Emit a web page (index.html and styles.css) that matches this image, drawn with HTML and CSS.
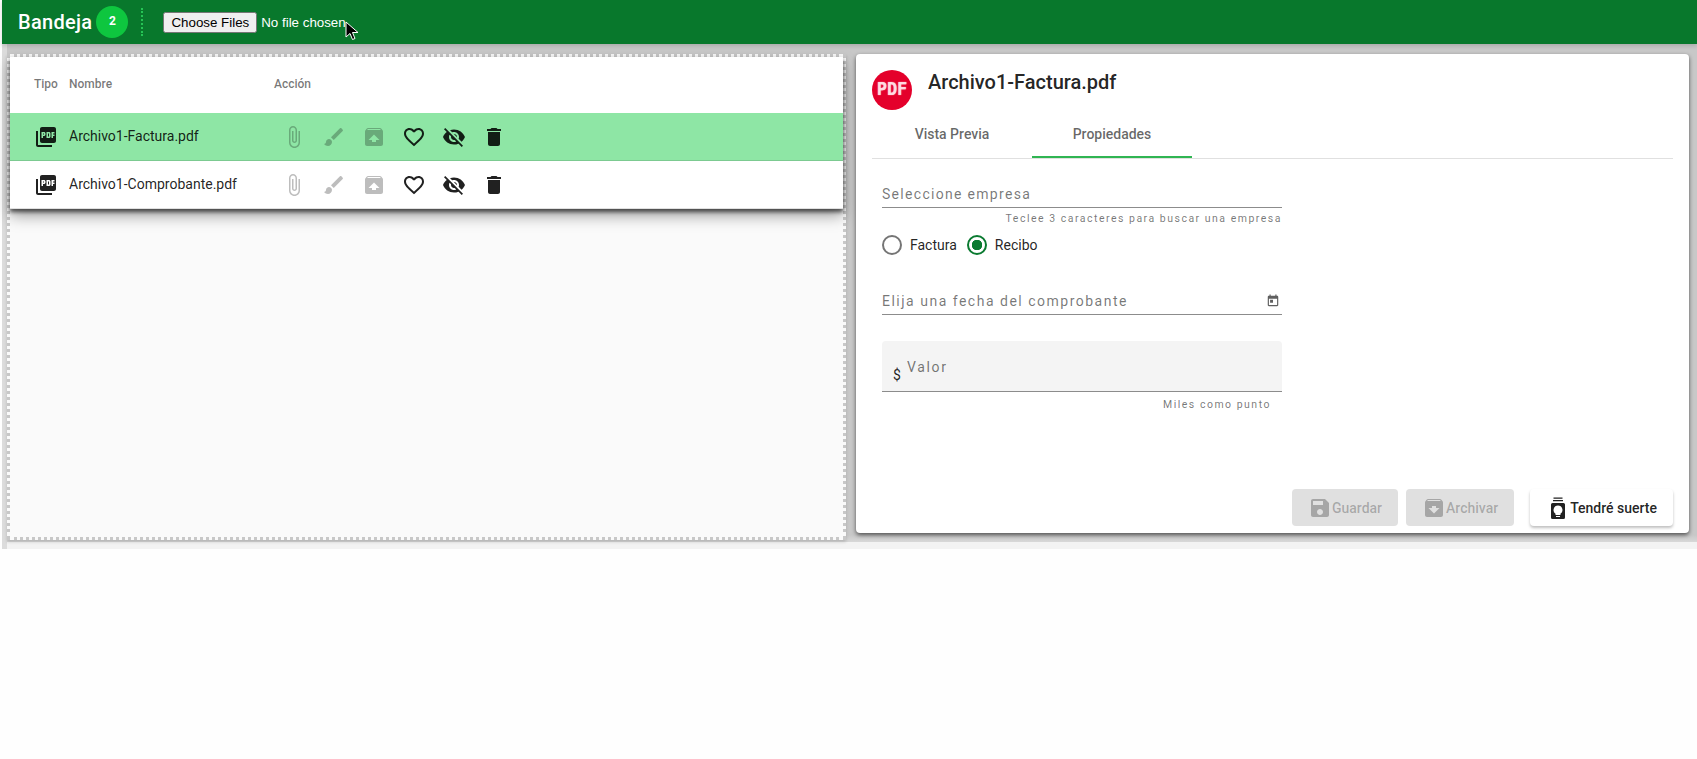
FILE: index.html

```html
<!doctype html>
<html lang="es">
<head>
    <meta http-equiv="Content-Type" content="text/html; charset=utf-8"/>
    <title>Bandeja</title>
    <link rel="stylesheet" href="styles.css">
</head>

<body>

<!--barra superior-->
<div class="topbar">
    <span class="topbar-title">Bandeja</span>
    <span class="badge">2</span>
    <span class="topbar-sep"></span>
    <input class="file-input" type="file" multiple>
    <svg class="mouse" viewBox="0 0 14 20"><path d="M1 1v15l4-3.5 2.5 6 2.5-1-2.5-6H13z"/></svg>
</div>

<div class="main">
    <!--lista de archivos-->
    <div class="dropzone">
        <div class="table">
            <div class="table-row table-head">
                <span>Tipo</span>
                <span>Nombre</span>
                <span>Acción</span>
            </div>
            <div class="table-row file-row selected">
                <svg class="icon" viewBox="0 0 24 24"><path d="M20 2H8c-1.1 0-2 .9-2 2v12c0 1.1.9 2 2 2h12c1.1 0 2-.9 2-2V4c0-1.1-.9-2-2-2zm-8.5 7.5c0 .83-.67 1.5-1.5 1.5H9v2H7.5V7H10c.83 0 1.5.67 1.5 1.5v1zm5 2c0 .83-.67 1.5-1.5 1.5h-2.5V7H15c.83 0 1.5.67 1.5 1.5v3zm4-3H19v1h1.5V11H19v2h-1.5V7h3v1.5zM9 9.5h1v-1H9v1zM4 6H2v14c0 1.1.9 2 2 2h14v-2H4V6zm10 5.5h1v-3h-1v3z"/></svg>
                <span class="file-name">Archivo1-Factura.pdf</span>
                <div class="actions">
                    <span class="action off"><svg class="icon" viewBox="0 0 24 24"><path d="M16.5 6v11.5c0 2.21-1.79 4-4 4s-4-1.79-4-4V5c0-1.38 1.12-2.5 2.5-2.5s2.5 1.12 2.5 2.5v10.5c0 .55-.45 1-1 1s-1-.45-1-1V6H10v9.5c0 1.38 1.12 2.5 2.5 2.5s2.5-1.12 2.5-2.5V5c0-2.21-1.79-4-4-4S7 2.79 7 5v12.5c0 3.04 2.46 5.5 5.5 5.5s5.5-2.46 5.5-5.5V6h-1.5z"/></svg></span>
                    <span class="action off"><svg class="icon" viewBox="0 0 24 24"><path d="M7 14c-1.66 0-3 1.34-3 3 0 1.31-1.16 2-2 2 .92 1.22 2.49 2 4 2 2.21 0 4-1.79 4-4 0-1.66-1.34-3-3-3zm13.71-9.37l-1.34-1.34c-.39-.39-1.02-.39-1.41 0L9 12.25 11.75 15l8.96-8.96c.39-.39.39-1.02 0-1.41z"/></svg></span>
                    <span class="action off"><svg class="icon" viewBox="0 0 24 24"><path d="M20.55 5.22l-1.39-1.68C18.88 3.21 18.47 3 18 3H6c-.47 0-.88.21-1.15.55L3.46 5.22C3.17 5.57 3 6.01 3 6.5V19c0 1.1.89 2 2 2h14c1.1 0 2-.9 2-2V6.5c0-.49-.17-.93-.45-1.28zM12 9.5l5.5 5.5H14v2h-4v-2H6.5L12 9.5zM5.12 5l.82-1h12l.93 1H5.12z"/></svg></span>
                    <span class="action"><svg class="icon" viewBox="0 0 24 24"><path d="M16.5 3c-1.74 0-3.41.81-4.5 2.09C10.91 3.81 9.24 3 7.5 3 4.42 3 2 5.42 2 8.5c0 3.78 3.4 6.86 8.55 11.54L12 21.35l1.45-1.32C18.6 15.36 22 12.28 22 8.5 22 5.42 19.58 3 16.5 3zm-4.4 15.55l-.1.1-.1-.1C7.14 14.24 4 11.39 4 8.5 4 6.5 5.5 5 7.5 5c1.54 0 3.04.99 3.57 2.36h1.87C13.46 5.99 14.96 5 16.5 5c2 0 3.5 1.5 3.5 3.5 0 2.89-3.14 5.74-7.9 10.05z"/></svg></span>
                    <span class="action"><svg class="icon" viewBox="0 0 24 24"><path d="M12 7c2.76 0 5 2.24 5 5 0 .65-.13 1.26-.36 1.83l2.92 2.92c1.51-1.26 2.7-2.89 3.43-4.75-1.73-4.39-6-7.5-11-7.5-1.4 0-2.74.25-3.98.7l2.16 2.16C10.74 7.13 11.35 7 12 7zM2 4.27l2.28 2.28.46.46C3.08 8.3 1.78 10.02 1 12c1.73 4.39 6 7.5 11 7.5 1.55 0 3.03-.3 4.38-.84l.42.42L19.73 22 21 20.73 3.27 3 2 4.27zM7.53 9.8l1.55 1.55c-.05.21-.08.43-.08.65 0 1.66 1.34 3 3 3 .22 0 .44-.03.65-.08l1.55 1.55c-.67.33-1.41.53-2.2.53-2.76 0-5-2.24-5-5 0-.79.2-1.53.53-2.2zm4.31-.78l3.15 3.15.02-.16c0-1.66-1.34-3-3-3l-.17.01z"/></svg></span>
                    <span class="action"><svg class="icon" viewBox="0 0 24 24"><path d="M6 19c0 1.1.9 2 2 2h8c1.1 0 2-.9 2-2V7H6v12zM19 4h-3.5l-1-1h-5l-1 1H5v2h14V4z"/></svg></span>
                </div>
            </div>
            <div class="table-row file-row">
                <svg class="icon" viewBox="0 0 24 24"><path d="M20 2H8c-1.1 0-2 .9-2 2v12c0 1.1.9 2 2 2h12c1.1 0 2-.9 2-2V4c0-1.1-.9-2-2-2zm-8.5 7.5c0 .83-.67 1.5-1.5 1.5H9v2H7.5V7H10c.83 0 1.5.67 1.5 1.5v1zm5 2c0 .83-.67 1.5-1.5 1.5h-2.5V7H15c.83 0 1.5.67 1.5 1.5v3zm4-3H19v1h1.5V11H19v2h-1.5V7h3v1.5zM9 9.5h1v-1H9v1zM4 6H2v14c0 1.1.9 2 2 2h14v-2H4V6zm10 5.5h1v-3h-1v3z"/></svg>
                <span class="file-name">Archivo1-Comprobante.pdf</span>
                <div class="actions">
                    <span class="action off"><svg class="icon" viewBox="0 0 24 24"><path d="M16.5 6v11.5c0 2.21-1.79 4-4 4s-4-1.79-4-4V5c0-1.38 1.12-2.5 2.5-2.5s2.5 1.12 2.5 2.5v10.5c0 .55-.45 1-1 1s-1-.45-1-1V6H10v9.5c0 1.38 1.12 2.5 2.5 2.5s2.5-1.12 2.5-2.5V5c0-2.21-1.79-4-4-4S7 2.79 7 5v12.5c0 3.04 2.46 5.5 5.5 5.5s5.5-2.46 5.5-5.5V6h-1.5z"/></svg></span>
                    <span class="action off"><svg class="icon" viewBox="0 0 24 24"><path d="M7 14c-1.66 0-3 1.34-3 3 0 1.31-1.16 2-2 2 .92 1.22 2.49 2 4 2 2.21 0 4-1.79 4-4 0-1.66-1.34-3-3-3zm13.71-9.37l-1.34-1.34c-.39-.39-1.02-.39-1.41 0L9 12.25 11.75 15l8.96-8.96c.39-.39.39-1.02 0-1.41z"/></svg></span>
                    <span class="action off"><svg class="icon" viewBox="0 0 24 24"><path d="M20.55 5.22l-1.39-1.68C18.88 3.21 18.47 3 18 3H6c-.47 0-.88.21-1.15.55L3.46 5.22C3.17 5.57 3 6.01 3 6.5V19c0 1.1.89 2 2 2h14c1.1 0 2-.9 2-2V6.5c0-.49-.17-.93-.45-1.28zM12 9.5l5.5 5.5H14v2h-4v-2H6.5L12 9.5zM5.12 5l.82-1h12l.93 1H5.12z"/></svg></span>
                    <span class="action"><svg class="icon" viewBox="0 0 24 24"><path d="M16.5 3c-1.74 0-3.41.81-4.5 2.09C10.91 3.81 9.24 3 7.5 3 4.42 3 2 5.42 2 8.5c0 3.78 3.4 6.86 8.55 11.54L12 21.35l1.45-1.32C18.6 15.36 22 12.28 22 8.5 22 5.42 19.58 3 16.5 3zm-4.4 15.55l-.1.1-.1-.1C7.14 14.24 4 11.39 4 8.5 4 6.5 5.5 5 7.5 5c1.54 0 3.04.99 3.57 2.36h1.87C13.46 5.99 14.96 5 16.5 5c2 0 3.5 1.5 3.5 3.5 0 2.89-3.14 5.74-7.9 10.05z"/></svg></span>
                    <span class="action"><svg class="icon" viewBox="0 0 24 24"><path d="M12 7c2.76 0 5 2.24 5 5 0 .65-.13 1.26-.36 1.83l2.92 2.92c1.51-1.26 2.7-2.89 3.43-4.75-1.73-4.39-6-7.5-11-7.5-1.4 0-2.74.25-3.98.7l2.16 2.16C10.74 7.13 11.35 7 12 7zM2 4.27l2.28 2.28.46.46C3.08 8.3 1.78 10.02 1 12c1.73 4.39 6 7.5 11 7.5 1.55 0 3.03-.3 4.38-.84l.42.42L19.73 22 21 20.73 3.27 3 2 4.27zM7.53 9.8l1.55 1.55c-.05.21-.08.43-.08.65 0 1.66 1.34 3 3 3 .22 0 .44-.03.65-.08l1.55 1.55c-.67.33-1.41.53-2.2.53-2.76 0-5-2.24-5-5 0-.79.2-1.53.53-2.2zm4.31-.78l3.15 3.15.02-.16c0-1.66-1.34-3-3-3l-.17.01z"/></svg></span>
                    <span class="action"><svg class="icon" viewBox="0 0 24 24"><path d="M6 19c0 1.1.9 2 2 2h8c1.1 0 2-.9 2-2V7H6v12zM19 4h-3.5l-1-1h-5l-1 1H5v2h14V4z"/></svg></span>
                </div>
            </div>
        </div>
    </div>

    <!--propiedades del archivo-->
    <div class="card">
        <div class="card-head">
            <span class="avatar">PDF</span>
            <span class="card-title">Archivo1-Factura.pdf</span>
        </div>
        <div class="tabs">
            <span class="tab">Vista Previa</span>
            <span class="tab current">Propiedades</span>
        </div>
        <div class="form">
            <input class="field field-company" type="text" placeholder="Seleccione empresa">
            <div class="hint">Teclee 3 caracteres para buscar una empresa</div>
            <div class="radios">
                <label class="radio"><input type="radio" name="tipo">Factura</label>
                <label class="radio"><input type="radio" name="tipo" checked>Recibo</label>
            </div>
            <div class="date-field">
                <input class="field field-date" type="text" placeholder="Elija una fecha del comprobante">
                <svg class="date-icon" viewBox="0 0 24 24"><path d="M19 3h-1V1h-2v2H8V1H6v2H5c-1.11 0-1.99.9-1.99 2L3 19c0 1.1.89 2 2 2h14c1.1 0 2-.9 2-2V5c0-1.1-.9-2-2-2zm0 16H5V8h14v11zM7 10h5v5H7z"/></svg>
            </div>
            <div class="fill-field">
                <span class="prefix">$</span>
                <input class="fill-input" type="text" placeholder="Valor">
            </div>
            <div class="hint hint-value">Miles como punto</div>
        </div>
        <div class="buttons">
            <button class="btn" disabled><svg class="icon" viewBox="0 0 24 24"><path d="M17 3H5c-1.11 0-2 .9-2 2v14c0 1.1.89 2 2 2h14c1.1 0 2-.9 2-2V7l-4-4zm-5 16c-1.66 0-3-1.34-3-3s1.34-3 3-3 3 1.34 3 3-1.34 3-3 3zm3-10H5V5h10v4z"/></svg>Guardar</button>
            <button class="btn" disabled><svg class="icon" viewBox="0 0 24 24"><path d="M20.54 5.23l-1.39-1.68C18.88 3.21 18.47 3 18 3H6c-.47 0-.88.21-1.16.55L3.46 5.23C3.17 5.57 3 6.02 3 6.5V19c0 1.1.9 2 2 2h14c1.1 0 2-.9 2-2V6.5c0-.48-.17-.93-.46-1.27zM12 17.5L6.5 12H10v-2h4v2h3.5L12 17.5zM5.12 5l.81-1h12l.94 1H5.12z"/></svg>Archivar</button>
            <button class="btn btn-luck"><svg class="icon" viewBox="0 0 24 24"><path fill-rule="evenodd" d="M7.5 1.5h9v1.2h-9zM7 4h10v1.2H7zM6.5 7h11A1.500 1.500 0 0 1 19 8.500v13a1.500 1.500 0 0 1-1.500 1.500h-11A1.500 1.500 0 0 1 5 21.500v-13A1.500 1.500 0 0 1 6.500 7zM12 9.500a4.500 4.500 0 0 0-2.500 8.200V19h5v-1.300A4.500 4.500 0 0 0 12 9.500zM10 20v1h4v-1z"/></svg>Tendré suerte</button>
        </div>
    </div>
</div>

</body>
</html>
```

FILE: styles.css

```css
* {
    box-sizing: border-box;
}
body {
    margin: 0;
    padding-left: 2px;
    background: #fefefe;
    font-family: Roboto, "Liberation Sans", sans-serif;
    font-size: 14px;
    color: rgba(0, 0, 0, 0.87);
}

/* barra superior */
.topbar {
    position: relative;
    z-index: 1;
    display: flex;
    align-items: center;
    height: 44px;
    padding-left: 16px;
    background: #08782c;
    color: #fff;
    box-shadow: 0 2px 4px rgba(0, 0, 0, 0.15);
}
.topbar-title {
    font-size: 20px;
    font-weight: 500;
    letter-spacing: 0.3px;
}
.badge {
    width: 32px;
    height: 32px;
    margin-left: 4px;
    border-radius: 50%;
    background: #0ec63f;
    font-size: 12px;
    font-weight: 700;
    line-height: 30px;
    text-align: center;
}
.topbar-sep {
    height: 28px;
    margin: 0 20px 0 13px;
    border-left: 2px dotted #25c455;
}
.file-input {
    color: #fff;
    font-family: "Liberation Sans", sans-serif;
    font-size: 13.33px;
}
.mouse {
    position: absolute;
    left: 343px;
    top: 21px;
    width: 14px;
    height: 20px;
    fill: #000;
    stroke: #fff;
    stroke-width: 1;
}

.main {
    display: flex;
    align-items: flex-start;
    gap: 10px;
    height: 505px;
    padding: 10px 8px 0 0;
    border-left: 5px solid #dcdcdc;
    background: linear-gradient(#c8c8c8 calc(100% - 14px), #d8d8d8 calc(100% - 7px), #f3f3f3 calc(100% - 7px));
}

/* lista */
.dropzone {
    width: 839px;
    height: 486px;
    border: 3px dotted #c8c8c8;
    background: #fafafa;
    box-shadow: 0 2px 3px rgba(0, 0, 0, 0.15);
}
.table {
    background: #fff;
    box-shadow: 0 3px 4px rgba(0, 0, 0, 0.6), 0 7px 14px rgba(0, 0, 0, 0.35);
}
.table-row {
    display: grid;
    grid-template-columns: 35px 205px 1fr;
    align-items: center;
    padding-left: 24px;
}
.table-head {
    height: 56px;
    padding-bottom: 3px;
    font-size: 12px;
    font-weight: 500;
    color: rgba(0, 0, 0, 0.54);
}
.file-row {
    height: 48px;
    border-bottom: 1px solid rgba(0, 0, 0, 0.12);
}
.file-row.selected {
    background: #8ee6a5;
}
.file-name {
    margin-bottom: 2px;
}
.icon {
    display: block;
    width: 24px;
    height: 24px;
    fill: currentColor;
}
.actions {
    display: flex;
}
.action {
    display: flex;
    justify-content: center;
    width: 40px;
}
.action.off {
    color: rgba(0, 0, 0, 0.26);
}

/* tarjeta */
.card {
    display: flex;
    flex-direction: column;
    width: 833px;
    height: 479px;
    padding: 16px 16px 7px;
    border-radius: 4px;
    background: #fff;
    box-shadow: 0 2px 4px rgba(0, 0, 0, 0.6);
}
.card-head {
    display: flex;
    gap: 16px;
}
.avatar {
    width: 40px;
    height: 40px;
    border-radius: 50%;
    background: #e4002b;
    color: rgba(255, 215, 222, 0.8);
    font-family: "DejaVu Sans Mono", monospace;
    font-size: 17px;
    font-weight: 700;
    line-height: 38px;
    text-align: center;
    text-shadow: 0 0 1px #fff;
}
.card-title {
    font-size: 20px;
    font-weight: 500;
    line-height: 24px;
}
.tabs {
    display: flex;
    height: 49px;
    border-bottom: 1px solid #e0e0e0;
}
.tab {
    width: 160px;
    height: 48px;
    font-weight: 500;
    line-height: 48px;
    text-align: center;
    color: rgba(0, 0, 0, 0.6);
}
.tab.current {
    border-bottom: 2px solid #30b552;
}
.form {
    width: 400px;
    margin-left: 10px;
}
.field {
    display: block;
    width: 400px;
    height: 24px;
    padding: 0 0 3px;
    border: 0;
    border-bottom: 1px solid #8c8c8c;
    outline: 0;
    background: none;
    font: 14px Roboto, sans-serif;
    letter-spacing: 1.3px;
}
.field-date {
    letter-spacing: 1.5px;
}
.field::placeholder,
.fill-input::placeholder {
    color: rgba(0, 0, 0, 0.54);
    opacity: 1;
}
.field-company {
    margin-top: 25px;
}
.hint {
    margin-top: 4px;
    font-size: 10.5px;
    line-height: 14px;
    letter-spacing: 1.5px;
    text-align: right;
    color: rgba(0, 0, 0, 0.54);
}
.hint-value {
    margin-top: 6px;
    padding-right: 11px;
}
.radios {
    display: flex;
    gap: 10px;
    margin-top: 9px;
}
.radio {
    display: flex;
    align-items: center;
    gap: 8px;
    height: 20px;
}
.radio input {
    width: 20px;
    height: 20px;
    margin: 0;
    border: 2px solid #757575;
    border-radius: 50%;
    appearance: none;
}
.radio input:checked {
    border-color: #0a7a30;
    background: radial-gradient(circle, #0a7a30 5px, transparent 5.5px);
}
.date-field {
    position: relative;
    margin-top: 36px;
}
.date-icon {
    position: absolute;
    right: 2px;
    top: 3px;
    width: 14px;
    height: 14px;
    fill: #5f5f5f;
}
.fill-field {
    display: flex;
    height: 51px;
    margin-top: 26px;
    padding-left: 11px;
    border-bottom: 1px solid #8c8c8c;
    border-radius: 4px 4px 0 0;
    background: #f4f4f4;
}
.prefix {
    margin-top: 26px;
    font-size: 14px;
    line-height: 16px;
}
.fill-input {
    flex: 1;
    height: 20px;
    margin: 16px 0 0 6px;
    padding: 0;
    border: 0;
    outline: 0;
    background: none;
    font: 14px Roboto, sans-serif;
    letter-spacing: 1.7px;
}
.buttons {
    display: flex;
    justify-content: flex-end;
    gap: 8px;
    margin-top: auto;
}
.btn {
    display: flex;
    align-items: center;
    height: 37px;
    padding: 0 16px;
    border: 0;
    border-radius: 4px;
    background: #e0e0e0;
    font: 500 14px Roboto, sans-serif;
    color: rgba(0, 0, 0, 0.26);
}
.btn-luck {
    margin-left: 8px;
    background: #fff;
    color: rgba(0, 0, 0, 0.87);
    box-shadow: 0 2px 3px rgba(0, 0, 0, 0.25);
}
```
